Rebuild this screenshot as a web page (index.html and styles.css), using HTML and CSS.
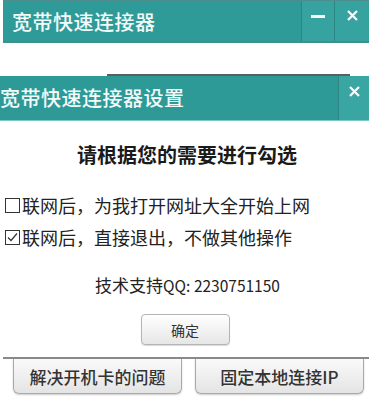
FILE: index.html
```html
<!DOCTYPE html>
<html lang="zh-CN">
<head>
<meta charset="utf-8">
<title>宽带快速连接器</title>
<link rel="stylesheet" href="styles.css">
</head>
<body>
<div class="page">
  <div class="main-bar">
    <div class="bar-title">宽带快速连接器</div>
    <div class="bar-btns">
      <div class="bar-btn"><span class="minus"></span></div>
      <div class="bar-btn close">
        <svg width="13" height="11" viewBox="0 0 13 11"><path d="M2 1 L11 10 M11 1 L2 10" stroke="#f2fafa" stroke-width="2.3" fill="none"/></svg>
      </div>
    </div>
  </div>
  <div class="shadow-line"></div>
  <div class="set-bar">
    <div class="set-title">宽带快速连接器设置</div>
    <div class="set-close">
      <svg width="13" height="11" viewBox="0 0 13 11"><path d="M2 1 L11 10 M11 1 L2 10" stroke="#f2fafa" stroke-width="2.3" fill="none"/></svg>
    </div>
  </div>
  <div class="content">
    <div class="heading">请根据您的需要进行勾选</div>
    <div class="opt first">
      <svg class="box" width="15" height="15" viewBox="0 0 15 15"><rect x="0.5" y="0.5" width="14" height="14" fill="#fff" stroke="#333" stroke-width="1"/></svg>
      <span>联网后，为我打开网址大全开始上网</span>
    </div>
    <div class="opt">
      <svg class="box" width="15" height="15" viewBox="0 0 15 15"><rect x="0.5" y="0.5" width="14" height="14" fill="#fff" stroke="#333" stroke-width="1"/><path d="M3 7.5 L6 10.5 L12 3.5" stroke="#333" stroke-width="1.2" fill="none"/></svg>
      <span>联网后，直接退出，不做其他操作</span>
    </div>
    <div class="support">技术支持<span class="qq">QQ: 2230751150</span></div>
    <div class="ok-row"><div class="ok">确定</div></div>
  </div>
  <div class="bottom">
    <div class="tab">解决开机卡的问题</div>
    <div class="tab">固定本地连接IP</div>
  </div>
</div>
</body>
</html>
```
FILE: styles.css
```css
html, body {
  margin: 0;
  padding: 0;
  background: #ffffff;
}
.page {
  width: 369px;
  height: 406px;
  overflow: hidden;
  font-family: "Noto Sans CJK SC", "Noto Sans", sans-serif;
  color: #222;
}
.main-bar {
  margin-left: 3px;
  height: 40px;
  border-top: 1px solid #4d8d8c;
  border-bottom: 2px solid #3f8f8c;
  background: #2f9b98;
  display: flex;
  align-items: center;
  justify-content: space-between;
}
.bar-title {
  color: #f2fafa;
  font-size: 20px;
  font-weight: 500;
  padding-left: 9px;
  letter-spacing: 0.5px;
}
.bar-btns {
  display: flex;
  height: 100%;
}
.bar-btn {
  width: 32px;
  height: 100%;
  background: #37a3a0;
  border-left: 1px solid #2c8683;
  display: flex;
  align-items: center;
  justify-content: center;
}
.bar-btn.close {
  width: 35px;
  padding-bottom: 12px;
  box-sizing: border-box;
}
.minus {
  width: 14px;
  height: 3px;
  background: #f2fafa;
  margin-bottom: 10px;
}
.shadow-line {
  margin: 31px 0 0 107px;
  width: 243px;
  height: 2px;
  background: #5a5f5f;
}
.set-bar {
  height: 44px;
  background: #2e9a97;
  border-bottom: 1px solid #7cc8c6;
  display: flex;
  justify-content: space-between;
}
.set-title {
  color: #f2fafa;
  font-size: 20px;
  font-weight: 500;
  line-height: 44px;
  letter-spacing: 0.5px;
}
.set-close {
  width: 31px;
  background: #3aa6a3;
  border-left: 1px solid #2c8683;
  display: flex;
  justify-content: center;
  padding-top: 10px;
  box-sizing: border-box;
}
.content {
  display: flex;
  flex-direction: column;
}
.heading {
  margin-top: 20px;
  text-align: center;
  font-size: 20px;
  font-weight: 700;
  line-height: 28px;
  padding-left: 5px;
  color: #1a1a1a;
}
.opt {
  display: flex;
  align-items: center;
  gap: 2px;
  padding-left: 5px;
  font-size: 18px;
  line-height: 28px;
  margin-top: 4px;
  color: #222;
}
.opt.first {
  margin-top: 22px;
}
.box {
  flex: none;
}
.support {
  margin-top: 22px;
  text-align: center;
  font-size: 17px;
  line-height: 24px;
  padding-left: 6px;
  color: #222;
}
.qq {
  font-size: 15.5px;
}
.ok-row {
  display: flex;
  justify-content: center;
  margin-top: 17px;
}
.ok {
  margin-left: 1px;
  width: 87px;
  height: 29px;
  border: 1px solid #b4b4b4;
  border-radius: 4px;
  background: linear-gradient(#ffffff, #e6e6e6);
  box-shadow: 0 1px 1px rgba(0,0,0,0.15);
  display: flex;
  align-items: center;
  justify-content: center;
  font-size: 14px;
  color: #333;
}
.bottom {
  margin: 12px 0 0 3px;
  border-top: 2px solid #8a8a8a;
  display: flex;
  gap: 13px;
  padding-left: 10px;
}
.tab {
  width: 167px;
  height: 34px;
  border: 1px solid #a9a9a9;
  border-top: none;
  border-radius: 0 0 6px 6px;
  background: linear-gradient(#fafafa, #e4e4e4);
  box-shadow: 0 1px 2px rgba(0,0,0,0.2);
  display: flex;
  align-items: center;
  justify-content: center;
  font-size: 17px;
  font-weight: 500;
  color: #333;
}
```
